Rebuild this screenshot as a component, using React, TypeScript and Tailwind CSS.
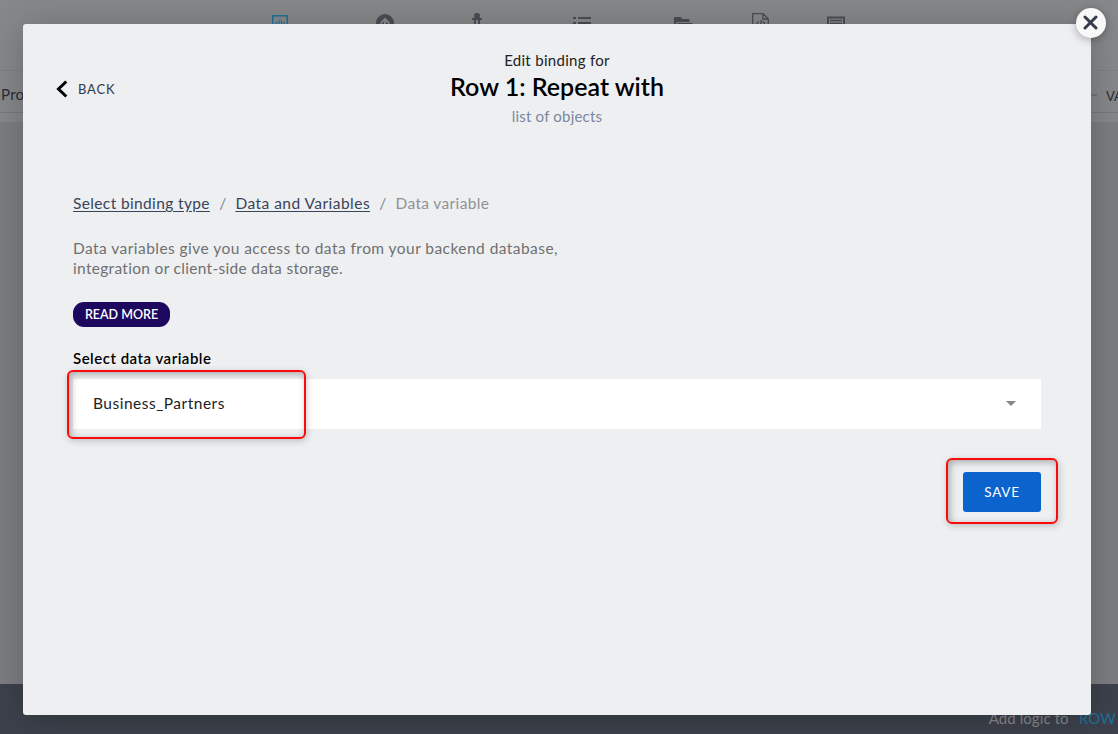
import React from "react";

function Toolbar() {
  return (
    <div className="relative h-[71px] shrink-0 border-b border-[#7f8082] bg-[#868789]">
      <svg className="absolute left-[272px] top-[15px] text-[#1c7199]" width="16" height="16" viewBox="0 0 16 16" fill="none" stroke="currentColor">
        <rect x="0.75" y="0.75" width="14.5" height="14.5" strokeWidth="1.5" />
        <path d="M4.500 7v6M7 6v7M9.500 6v7M12 7v6M8 4v1.300" strokeWidth="1.200" />
      </svg>
      <svg className="absolute left-[376px] top-[14px] text-[#4b4d54]" width="18" height="18" viewBox="0 0 18 18">
        <circle cx="9" cy="9" r="9" fill="currentColor" />
        <path d="M9 14V5.500M4.500 9.500L9 5l4.500 4.500" stroke="#868789" strokeWidth="2" fill="none" />
      </svg>
      <svg className="absolute left-[472px] top-[13px] text-[#4b4d54]" width="10" height="16" viewBox="0 0 10 16" fill="currentColor">
        <path d="M2.200 5V2a2 2 0 0 1 2-2h1.600a2 2 0 0 1 2 2v3H10v2H8v9H6.200V7H3.800v9H2V7H0V5z" />
      </svg>
      <svg className="absolute left-[573px] top-[17px] text-[#4b4d54]" width="18" height="14" viewBox="0 0 18 14" fill="currentColor">
        <path d="M0 0h3v2H0zM5 0h13v2H5zM0 5h3v2H0zM5 5h13v2H5zM0 10h3v2H0zM5 10h13v2H5z" />
      </svg>
      <svg className="absolute left-[674px] top-[17px] text-[#4b4d54]" width="19" height="14" viewBox="0 0 19 14" fill="currentColor">
        <path d="M0 0h6.500l2 2H15.500v3H2.500L0 12zM3.500 6H18.500l-3 7H0z" />
      </svg>
      <svg className="absolute left-[752px] top-[13px] text-[#4b4d54]" width="17" height="20" viewBox="0 0 17 20" fill="none" stroke="currentColor" strokeWidth="1.300">
        <path d="M.7.700H11l5.300 5.300v13H.7zM11 .7V6h5.300M6.500 8.500L4 12l2.500 3M11 8.500l2.500 3.500-2.500 3M9.500 7l-2 9" />
      </svg>
      <svg className="absolute left-[827px] top-[16px] text-[#4b4d54]" width="18" height="16" viewBox="0 0 18 16" fill="none" stroke="currentColor" strokeWidth="2">
        <rect x="1" y="1.500" width="16" height="13" />
        <path d="M3 4.500h12M3 7.500h12" strokeWidth="1.300" />
      </svg>
    </div>
  );
}

function EditorBackground() {
  return (
    <div className="flex h-full flex-col bg-[#7c7d81]">
      <Toolbar />
      <div className="h-[51px] shrink-0 bg-[#868789]">
        <div className="flex h-[42px] justify-between border-b border-[#77787a] text-[15px] leading-[20px] text-[#292c33]">
          <span className="pl-px pt-[13px] tracking-[0.3px]">Properties</span>
          <span className="flex w-[28px] shrink-0 gap-[9px] overflow-hidden pt-[15px] text-[13px]">
            <i className="mt-[8px] h-[2px] w-[7px] shrink-0 bg-[#727375]" />
            VARIABLES
          </span>
        </div>
      </div>
      <div className="grow" />
      <div className="flex h-[50px] shrink-0 items-start justify-end gap-[10px] whitespace-nowrap bg-[#3c414b] pr-[2px] pt-[24px] text-[15px] leading-[20px]">
        <span className="tracking-[0.1px] text-[#85878a]">Add logic to</span>
        <span className="tracking-[0.2px] text-[#21709a]">ROW</span>
      </div>
    </div>
  );
}

function Dialog() {
  return (
    <section className="relative h-[691px] w-[1068px] rounded-[3px] bg-[#eeeff1] shadow-[0_4px_34px_rgba(0,0,0,0.22)]">
      <header className="relative flex h-[154px] flex-col items-center pt-[25px]">
        <button className="absolute left-[33px] top-[55px] flex items-center gap-[10px] text-[13px] leading-[20px] tracking-[0.8px] text-[#31384a]">
          <svg width="12" height="18" viewBox="0 0 12 18" fill="none" stroke="#000" strokeWidth="3">
            <path d="M10.300 1.500L2.500 9l7.800 7.500" />
          </svg>
          BACK
        </button>
        <p className="text-[15px] leading-[22px] tracking-[0.3px] text-[#222]">Edit binding for</p>
        <h1 className="text-[25px] font-semibold leading-[30px] text-black">Row 1: Repeat with</h1>
        <p className="pt-[4px] text-[15px] leading-[22px] tracking-[0.2px] text-[#7a879f]">list of objects</p>
      </header>

      <main className="px-[50px]">
        <nav className="flex pt-[14px] text-[15.5px] leading-[22px] text-[#85878c]">
          <a className="tracking-[0.37px] text-[#38445a] underline underline-offset-2">Select binding type</a>
          <span className="w-[25.5px] text-center">/</span>
          <a className="tracking-[0.47px] text-[#38445a] underline underline-offset-2">Data and Variables</a>
          <span className="w-[25.5px] text-center">/</span>
          <span className="tracking-[0.35px] text-[#909196]">Data variable</span>
        </nav>
        <p className="whitespace-nowrap pt-[24px] text-[15.5px] leading-[20px] text-[#6e6f71]">
          <span className="tracking-[0.45px]">Data variables give you access to data from your backend database,</span>
          <br />
          <span className="tracking-[0.31px]">integration or client-side data storage.</span>
        </p>
        <button className="mt-[24px] flex h-[25px] w-[97px] items-center justify-center rounded-[11px] bg-[#1e075f] pt-px text-[12.5px] font-semibold text-white">
          READ MORE
        </button>
        <label className="block pt-[20px] text-[15px] font-semibold leading-[22px] tracking-[0.5px] text-black">Select data variable</label>
        <div className="relative mt-[10px] flex h-[50px] items-center justify-between bg-white pl-[20px] pr-[25px] text-[15.5px] leading-[22px] text-[#222]">
          <span className="pb-[2px] tracking-[0.5px]">Business_Partners</span>
          <svg className="mb-px" width="10" height="5" viewBox="0 0 10 5" fill="#85868b">
            <path d="M0 0h10L5 5z" />
          </svg>
          <i className="absolute -left-[6.5px] -top-[9.5px] h-[69px] w-[239px] rounded-[6px] border-2 border-[#fa0a0a] shadow-[1px_2px_7px_rgba(0,0,0,0.2),inset_2px_2px_7px_rgba(0,0,0,0.3)]" />
        </div>
        <div className="flex justify-end pt-[43px]">
          <div className="relative">
            <button className="h-[40px] w-[78px] rounded-[3px] bg-[#0b63ce] text-[13.5px] tracking-[0.7px] text-white">SAVE</button>
            <i className="absolute -left-[17.5px] -top-[14.5px] h-[66px] w-[112px] rounded-[6px] border-2 border-[#fa0a0a] shadow-[1px_2px_7px_rgba(0,0,0,0.2),inset_2px_2px_7px_rgba(0,0,0,0.3)]" />
          </div>
        </div>
      </main>

      <button className="absolute -right-[15px] -top-[16px] flex h-[30px] w-[30px] items-center justify-center rounded-full bg-[#f8f8f9] shadow-[0_2px_8px_rgba(0,0,0,0.3)]">
        <svg className="mb-px mr-px" width="15" height="15" viewBox="0 0 15 15" stroke="#353b49" strokeWidth="3" strokeLinecap="round">
          <path d="M2 2l11 11M13 2L2 13" />
        </svg>
      </button>
    </section>
  );
}

export default function App() {
  return (
    <div className="relative h-[734px] w-[1118px] overflow-hidden font-['Lato',sans-serif]">
      <EditorBackground />
      <div className="absolute inset-0 pl-[23px] pt-[24px]">
        <Dialog />
      </div>
    </div>
  );
}
